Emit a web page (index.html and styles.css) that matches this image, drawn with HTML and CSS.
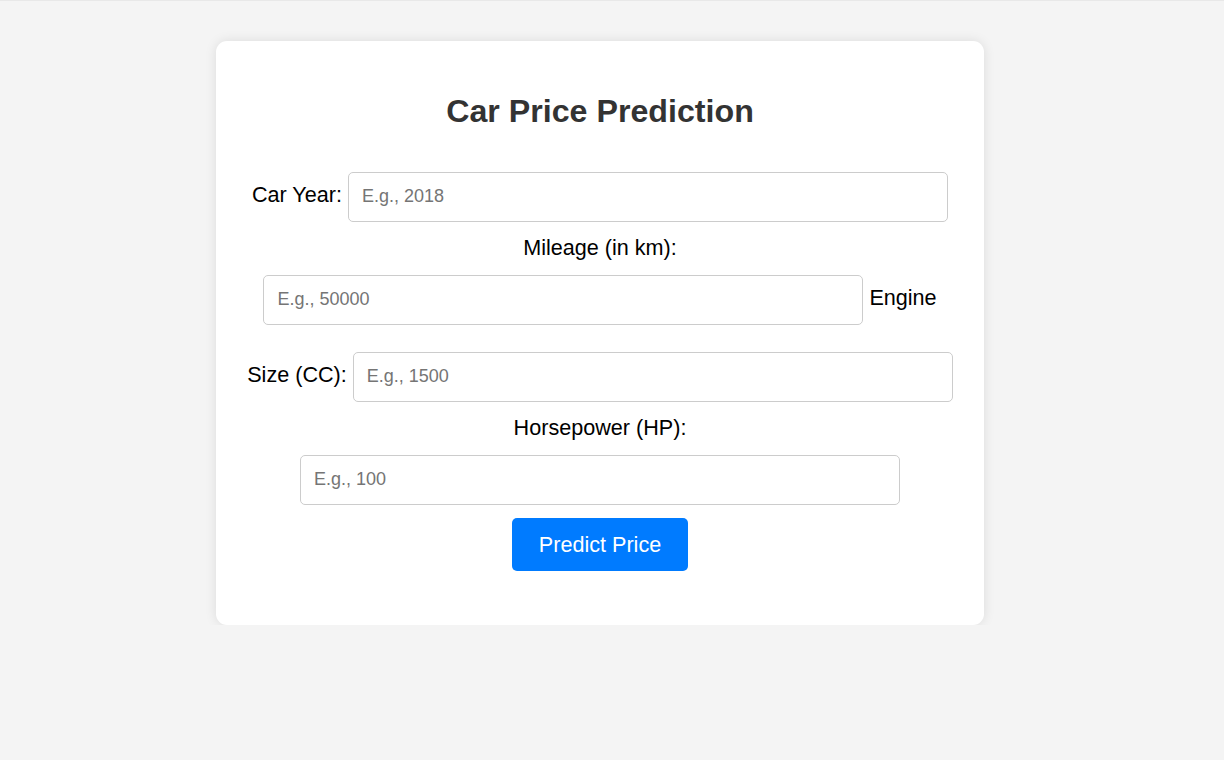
FILE: index.html
```html
<!DOCTYPE html>
<html lang="en">
<head>
<meta charset="utf-8">
<title>Car Price Prediction</title>
<link rel="stylesheet" href="styles.css">
</head>
<body>
<div class="card">
  <h1 class="title">Car Price Prediction</h1>
  <form class="form">
    <label class="label" for="year">Car Year:</label>
    <input class="field" type="number" id="year" placeholder="E.g., 2018">
    <label class="label" for="mileage">Mileage (in km):</label>
    <input class="field" type="number" id="mileage" placeholder="E.g., 50000">
    <label class="label" for="engine">Engine Size (CC):</label>
    <input class="field" type="number" id="engine" placeholder="E.g., 1500">
    <label class="label" for="hp">Horsepower (HP):</label>
    <input class="field" type="number" id="hp" placeholder="E.g., 100">
    <button class="btn" type="button">Predict Price</button>
  </form>
</div>
</body>
</html>
```

FILE: styles.css
```css
html {
  box-shadow: inset 0 1px 0 #e8e8e8;
}
body {
  margin: 0;
  padding: 41px 24px 0 0;
  background: #f4f4f4;
  font-family: "Liberation Sans", Arial, sans-serif;
}
.card {
  box-sizing: border-box;
  width: 768px;
  margin: 0 auto;
  padding: 30px 30px 54px;
  background: #fff;
  border-radius: 11px;
  box-shadow: 0 0 12px rgba(0, 0, 0, 0.1);
}
.title {
  margin: 22px 0 29px;
  font-size: 32.2px;
  line-height: 36px;
  font-weight: bold;
  color: #333;
  text-align: center;
}
.form {
  margin: 0;
  text-align: center;
  font-size: 21.6px;
  line-height: 26px;
  color: #000;
}
.label {
  font-size: 21.6px;
}
.field {
  box-sizing: border-box;
  width: 600px;
  height: 50px;
  margin: 14px 0 13px;
  padding: 11px 13px 13px;
  border: 1px solid #ccc;
  border-radius: 5px;
  font-family: "Liberation Sans", Arial, sans-serif;
  font-size: 18px;
  line-height: normal;
  color: #333;
  background: #fff;
  outline: none;
  -moz-appearance: textfield;
}
.field::-webkit-outer-spin-button,
.field::-webkit-inner-spin-button {
  -webkit-appearance: none;
  margin: 0;
}
.field::placeholder {
  color: #757575;
}
.btn {
  box-sizing: border-box;
  height: 53px;
  margin: 0;
  padding: 0 27px;
  border: none;
  border-radius: 5px;
  background: #007bff;
  color: #fff;
  font-family: "Liberation Sans", Arial, sans-serif;
  font-size: 21.6px;
  line-height: normal;
  cursor: pointer;
}
```
